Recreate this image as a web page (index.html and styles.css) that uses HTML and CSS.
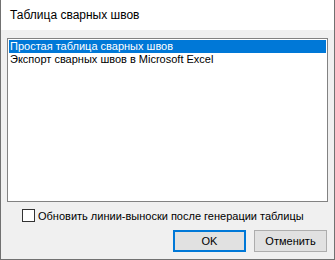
FILE: index.html
```html
<!DOCTYPE html>
<html>
<head>
<meta charset="utf-8">
<link rel="stylesheet" href="styles.css">
</head>
<body>
<div class="window">
  <div class="titlebar">Таблица сварных швов</div>
  <div class="content">
    <div class="listbox">
      <div class="item selected">Простая таблица сварных швов</div>
      <div class="item">Экспорт сварных швов в Microsoft Excel</div>
    </div>
    <label class="check-row">
      <span class="checkbox"></span>
      <span class="check-label">Обновить линии-выноски после генерации таблицы</span>
    </label>
    <div class="buttons">
      <div class="btn btn-default">OK</div>
      <div class="btn">Отменить</div>
    </div>
  </div>
</div>
</body>
</html>
```
FILE: styles.css
```css
html, body {
  margin: 0;
  padding: 0;
  background: #ffffff;
}
.window {
  width: 335px;
  height: 260px;
  box-sizing: border-box;
  border-left: 1px solid #717171;
  border-right: 1px solid #717171;
  border-bottom: 1px solid #717171;
  display: flex;
  flex-direction: column;
  font-family: "Liberation Sans", Arial, sans-serif;
  color: #000;
}
.titlebar {
  height: 30px;
  box-sizing: border-box;
  background: #ffffff;
  padding-left: 9px;
  padding-top: 8px;
  font-size: 12px;
  line-height: 15px;
}
.content {
  flex: 1;
  background: #f0f0f0;
  padding: 8px 6px 0 6px;
  display: flex;
  flex-direction: column;
}
.listbox {
  height: 164px;
  box-sizing: border-box;
  border: 1px solid #828282;
  background: #ffffff;
  padding: 1px;
  font-size: 11px;
}
.item {
  height: 13px;
  line-height: 13px;
  padding-left: 1px;
  white-space: nowrap;
}
.item.selected {
  background: #0078d7;
  color: #ffffff;
}
.check-row {
  display: flex;
  align-items: center;
  margin-top: 6px;
  margin-left: 15px;
  height: 15px;
  font-size: 11px;
}
.checkbox {
  width: 13px;
  height: 13px;
  box-sizing: border-box;
  border: 1px solid #333333;
  background: #ffffff;
  margin-right: 3px;
}
.buttons {
  display: flex;
  justify-content: flex-end;
  gap: 8px;
  margin-top: 7px;
  padding-right: 1px;
}
.btn {
  width: 73px;
  height: 22px;
  box-sizing: border-box;
  border: 1px solid #adadad;
  background: #e1e1e1;
  font-size: 11px;
  display: flex;
  align-items: center;
  justify-content: center;
}
.btn-default {
  border: 2px solid #0078d7;
}
```
